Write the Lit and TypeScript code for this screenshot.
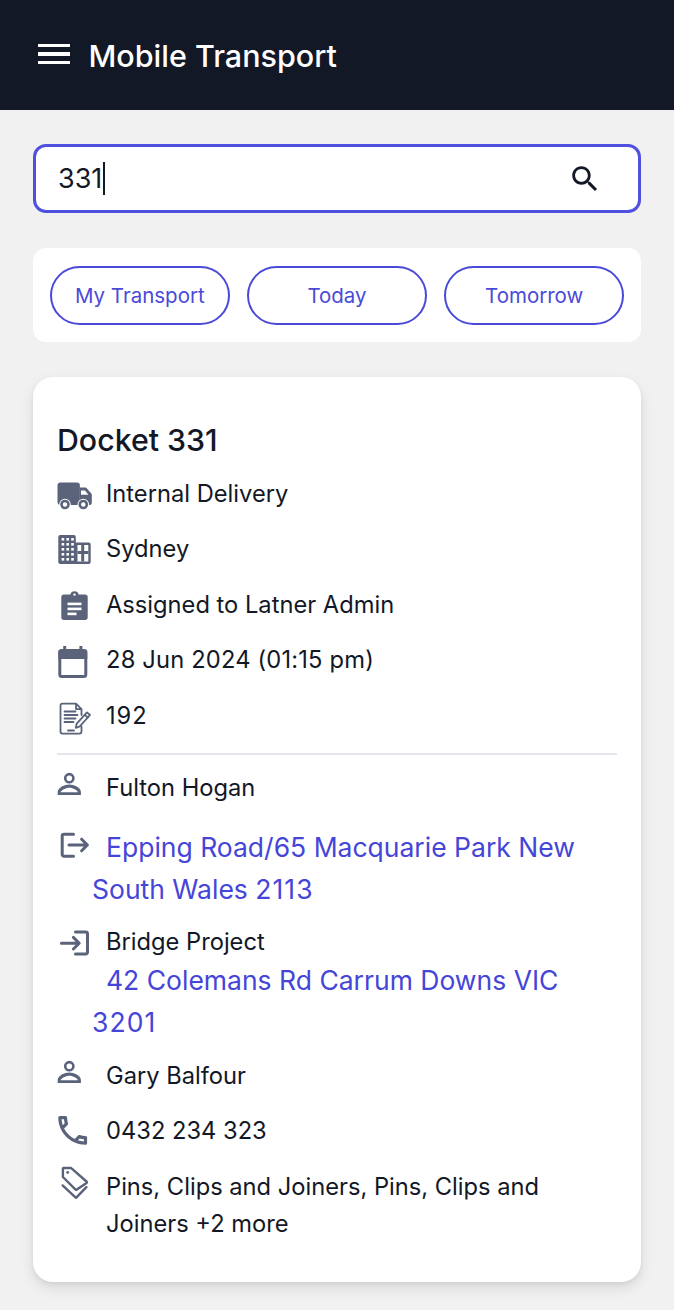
import { LitElement, html, css, svg } from 'lit';
import { customElement } from 'lit/decorators.js';

const W = '#ffffff';

const truck = svg`
  <path d="M3.5 7.4h16.4a3 3 0 0 1 3 3V30H3.5a3 3 0 0 1-3-3V10.4a3 3 0 0 1 3-3z" />
  <path d="M23 12.6h5.2a2 2 0 0 1 1.5.7l4.6 5.1a2 2 0 0 1 .5 1.3V28a2 2 0 0 1-2 2H23z" />
  <path d="M24 15.6h4l3.4 4.2h-7.4z" fill=${W} />
  <circle cx="8" cy="29.5" r="5.8" fill=${W} /><circle cx="8" cy="29.5" r="4.8" /><circle cx="8" cy="29.5" r="2.2" fill=${W} />
  <circle cx="26.3" cy="29.5" r="5.8" fill=${W} /><circle cx="26.3" cy="29.5" r="4.8" /><circle cx="26.3" cy="29.5" r="2.2" fill=${W} />`;

const building = svg`
  <path d="M3.3 5h13.5a2 2 0 0 1 2 2v5.5h12.9a2 2 0 0 1 2 2V32a2 2 0 0 1-2 2H3.3a2 2 0 0 1-2-2V7a2 2 0 0 1 2-2z" />
  <rect x="20.5" y="15" width="10.8" height="16.5" fill=${W} />
  ${[8, 13, 18, 23, 28].flatMap((y) =>
    [4.6, 9.4, 14.2].map((x) => svg`<rect x=${x} y=${y} width="2.6" height="2.6" fill=${W} />`)
  )}
  <rect x="20.5" y="21" width="10.8" height="3" /><rect x="24.2" y="15" width="3" height="16.5" />`;

const clipboard = svg`
  <path d="M7 8.5h6.4a4.2 4.2 0 0 1 8.2 0H28a2.7 2.7 0 0 1 2.7 2.7v20.1a2.7 2.7 0 0 1-2.7 2.7H7a2.7 2.7 0 0 1-2.7-2.7V11.2A2.7 2.7 0 0 1 7 8.5z" />
  <circle cx="17.5" cy="8.6" r="1.2" fill=${W} />
  <rect x="10.5" y="16.6" width="14" height="2.6" fill=${W} />
  <rect x="10.5" y="21.6" width="14" height="2.6" fill=${W} />
  <rect x="10.5" y="26.6" width="9" height="2.6" fill=${W} />`;

const calendar = svg`
  <rect x="2.8" y="9.5" width="26" height="26" rx="2" fill="none" stroke="currentColor" stroke-width="3" />
  <path d="M3.3 8.5h25a2 2 0 0 1 2 2v7.5H1.3v-7.5a2 2 0 0 1 2-2z" />
  <rect x="6.2" y="5" width="3" height="5" /><rect x="22.4" y="5" width="3" height="5" />`;

const docket = svg`
  <g fill="none" stroke="currentColor" stroke-width="1.8" stroke-linejoin="round" stroke-linecap="round">
    <path d="M19 6.6H5.5a2 2 0 0 0-2 2v26a2 2 0 0 0 2 2h17a2 2 0 0 0 2-2v-5.2M19 6.6l5.5 5.5v6M19 6.6v5.5h5.5" />
    <path d="M7.5 14.5h11M7.5 18h13M7.5 21.5h11M7.5 25h9M11 33.5h6" />
    <path d="M30 15.4l3 2.6-10.2 11.4-4 1.4.9-4.2z" />
    <path d="M27.8 17.8l3 2.7" />
  </g>`;

const person = svg`
  <circle cx="12.3" cy="9.2" r="4.1" fill="none" stroke="currentColor" stroke-width="2.6" />
  <path d="M.7 26v-3c0-4.5 7-7.5 11.6-7.5s11.6 3 11.6 7.5v3z" />
  <path d="M3.6 23.2c.5-1.9 5-4.5 8.7-4.5s8.2 2.6 8.7 4.5z" fill=${W} />`;

const exit = svg`
  <g fill="none" stroke="currentColor" stroke-width="3" stroke-linecap="round" stroke-linejoin="round">
    <path d="M16.5 8.2H7a1.8 1.8 0 0 0-1.8 1.8v18.4A1.8 1.8 0 0 0 7 30.2h9.5" />
    <path d="M12 19h18.4M24.6 13.2l5.8 5.8-5.8 5.8" />
  </g>`;

const enter = svg`
  <g fill="none" stroke="currentColor" stroke-width="3" stroke-linecap="round" stroke-linejoin="round">
    <path d="M18.5 9H28.7a1.8 1.8 0 0 1 1.8 1.8v18.4a1.8 1.8 0 0 1-1.8 1.8H18.5" />
    <path d="M4.4 20.2h17.6M16.4 14.4l5.8 5.8-5.8 5.8" />
  </g>`;

const phone = svg`
  <g transform="translate(-3.5 -.8) scale(1.6)">
    <path d="M6.54 5c.06.89.21 1.76.45 2.59l-1.2 1.2c-.41-1.2-.67-2.47-.76-3.79h1.51m9.86 12.02c.85.24 1.72.39 2.6.45v1.49c-1.32-.09-2.59-.35-3.8-.75l1.2-1.19M7.5 3H4c-.55 0-1 .45-1 1 0 9.39 7.61 17 17 17 .55 0 1-.45 1-1v-3.49c0-.55-.45-1-1-1-1.24 0-2.45-.2-3.57-.57-.1-.04-.21-.05-.31-.05-.26 0-.51.1-.71.29l-2.2 2.2c-2.83-1.45-5.15-3.76-6.59-6.59l2.2-2.2c.28-.28.36-.67.25-1.02C8.7 6.45 8.5 5.25 8.5 4c0-.55-.45-1-1-1z" />
  </g>`;

const tags = svg`
  <g fill="none" stroke="currentColor" stroke-width="2.4" stroke-linejoin="round" stroke-linecap="round">
    <path d="M6.6 0h7.2a1 1 0 0 1 .7.3l15 13.2a1 1 0 0 1 0 1.5l-9.6 6.6a1 1 0 0 1-1.3 0L5.9 9V.8a.8.8 0 0 1 .7-.8z" />
    <path d="M5.6 17.4l13.4 12.4 10.4-10.6" />
  </g>
  <circle cx="10.7" cy="4.4" r="1.4" />`;

const ic = (body: unknown) => html`<svg class="ic" viewBox="0 0 36 37" aria-hidden="true">${body}</svg>`;

@customElement('app-root')
export class AppRoot extends LitElement {
  static styles = css`
    :host {
      display: block;
      min-height: 1310px;
      background: #f1f1f1;
      font-family: Inter, 'Noto Sans', sans-serif;
      color: #131826;
    }
    .bar {
      display: flex;
      align-items: center;
      gap: 18.5px;
      height: 110px;
      padding: 0 38px;
      box-sizing: border-box;
      background: #131826;
      color: #fff;
      font-size: 30.5px;
      font-weight: 500;
    }
    .burger {
      display: flex;
      flex-direction: column;
      gap: 5px;
      width: 32px;
      margin-bottom: 2px;
    }
    .burger i {
      display: block;
      height: 3.5px;
      background: #fff;
    }
    main {
      display: flex;
      flex-direction: column;
      padding: 34px 33px 28px;
    }
    .search {
      display: flex;
      align-items: center;
      justify-content: space-between;
      height: 69px;
      box-sizing: border-box;
      padding: 0 36px 0 22px;
      background: #fff;
      border: 3px solid #4f4fe0;
      border-radius: 13px;
      font-size: 27px;
    }
    .value {
      display: flex;
      align-items: center;
    }
    .caret {
      width: 1.5px;
      height: 33px;
      margin-left: 1px;
      background: #131826;
    }
    .search svg {
      width: 34px;
      height: 34px;
      fill: #131826;
    }
    .filters {
      display: grid;
      grid-template-columns: repeat(3, 1fr);
      gap: 17.5px;
      margin-top: 35px;
      padding: 18px 17px 17px;
      background: #fff;
      border-radius: 13px;
    }
    .pill {
      display: flex;
      align-items: center;
      justify-content: center;
      height: 59px;
      box-sizing: border-box;
      border: 2px solid #4a4ad9;
      border-radius: 30px;
      color: #4a4ad9;
      font-size: 20.5px;
    }
    .card {
      margin-top: 35px;
      padding: 42px 24px 40px;
      background: #fff;
      border-radius: 20px;
      box-shadow: 0 6px 14px rgba(0, 0, 0, 0.1), 0 2px 4px rgba(0, 0, 0, 0.06);
      font-size: 23.7px;
      line-height: 37px;
    }
    h2 {
      margin: 0 0 13.5px;
      font-size: 30.3px;
      font-weight: 500;
      line-height: 42px;
    }
    .row {
      display: flex;
      align-items: flex-start;
      margin-top: 18.6px;
    }
    h2 + .row {
      margin-top: 0;
    }
    .row .ic {
      flex: none;
      margin-right: 13px;
    }
    .ic {
      width: 36px;
      height: 37px;
      overflow: visible;
      fill: #5a6379;
      color: #5a6379;
    }
    hr {
      height: 1.5px;
      margin: 19.5px 0 0;
      border: 0;
      background: #e3e6ec;
    }
    hr + .row {
      margin-top: 14.5px;
    }
    .flow {
      padding-left: 35px;
    }
    .flow .ic {
      margin-left: -35px;
      margin-right: 13px;
      vertical-align: top;
    }
    .from {
      margin-top: 19.5px;
    }
    .to {
      margin-top: 13.5px;
    }
    .to .link-line {
      margin-top: -1px;
    }
    .row.gary {
      margin-top: 13.5px;
    }
    a {
      color: #4545d8;
      text-decoration: none;
    }
    .link-line {
      font-size: 26.5px;
      line-height: 42px;
    }
    .indent {
      display: inline-block;
      width: 14px;
    }
    .num {
      letter-spacing: 0.04em;
    }
    .date {
      letter-spacing: 0.18px;
    }
  `;

  render() {
    return html`
      <header class="bar">
        <div class="burger"><i></i><i></i><i></i></div>
        <span>Mobile Transport</span>
      </header>
      <main>
        <div class="search">
          <div class="value"><span>331</span><span class="caret"></span></div>
          <svg viewBox="0 0 24 24" aria-hidden="true">
            <path d="M15.5 14h-.79l-.28-.27C15.41 12.59 16 11.11 16 9.5 16 5.91 13.09 3 9.5 3S3 5.91 3 9.5 5.91 16 9.5 16c1.61 0 3.09-.59 4.23-1.57l.27.28v.79l5 4.99L20.49 19l-4.99-5zm-6 0C7.01 14 5 11.99 5 9.5S7.01 5 9.5 5 14 7.01 14 9.5 11.99 14 9.5 14z" />
          </svg>
        </div>
        <div class="filters">
          <div class="pill">My Transport</div>
          <div class="pill">Today</div>
          <div class="pill">Tomorrow</div>
        </div>
        <section class="card">
          <h2>Docket 331</h2>
          <div class="row">${ic(truck)}<span>Internal Delivery</span></div>
          <div class="row">${ic(building)}<span>Sydney</span></div>
          <div class="row">${ic(clipboard)}<span>Assigned to Latner Admin</span></div>
          <div class="row">${ic(calendar)}<span class="date">28 Jun 2024 (01:15 pm)</span></div>
          <div class="row">${ic(docket)}<span class="num">192</span></div>
          <hr />
          <div class="row">${ic(person)}<span>Fulton Hogan</span></div>
          <div class="flow from link-line">
            ${ic(exit)}<a href="#">Epping Road/65 Macquarie Park New South Wales <span class="num">2113</span></a>
          </div>
          <div class="flow to">
            ${ic(enter)}<span>Bridge Project</span>
            <div class="link-line">
              <a href="#"><span class="indent"></span>42 Colemans Rd Carrum Downs VIC <span class="num">3201</span></a>
            </div>
          </div>
          <div class="row gary">${ic(person)}<span>Gary Balfour</span></div>
          <div class="row">${ic(phone)}<span>0432 234 323</span></div>
          <div class="row">${ic(tags)}<span>Pins, Clips and Joiners, Pins, Clips and Joiners +2 more</span></div>
        </section>
      </main>
    `;
  }
}
